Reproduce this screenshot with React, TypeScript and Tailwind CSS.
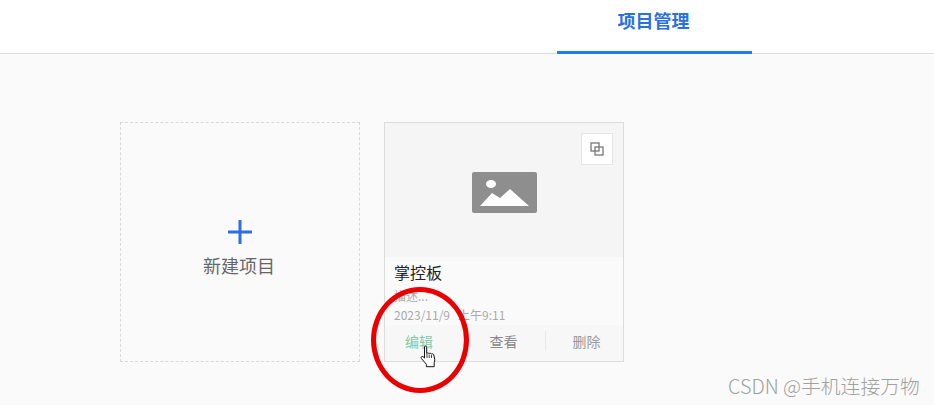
const font = "font-['Noto_Sans_CJK_SC','Liberation_Sans',sans-serif]";

const HandCursor = () => (
  <svg width="17" height="23" viewBox="0 0 17 23" className="absolute left-[420px] top-[345px]">
    <path
      d="M4.500 1.500c.9-.9 2.200-.4 2.200.9v6.200c.4-.8 2-.9 2.400.1.500-.7 2-.6 2.300.4.600-.6 2.100-.4 2.400.7l.9 4.500c.2 1.200 0 2.400-.5 3.400v4H6.400v-2.400L1.300 13.400c-.8-1.100.5-2.600 1.800-1.700l1.400 1.300V1.500z"
      fill="#fff"
      stroke="#111"
      strokeWidth="1"
      strokeLinejoin="round"
    />
    <path d="M7 9v4M9.200 9.500v3.500M11.500 10v3" stroke="#111" strokeWidth="0.8" fill="none" />
  </svg>
);

const CopyIcon = () => (
  <svg width="14" height="14" viewBox="0 0 14 14" fill="none" stroke="#777" strokeWidth="1.300">
    <rect x="1" y="1" width="8" height="8" />
    <rect x="5" y="5" width="8" height="8" />
  </svg>
);

const ImageIcon = () => (
  <svg width="65" height="41" viewBox="0 0 65 41">
    <rect x="0" y="0" width="65" height="41" rx="2" fill="#8e8e8e" />
    <ellipse cx="19" cy="12" rx="5" ry="4" fill="#fff" />
    <path d="M8 34 20 21 28 26 38 17 57 34Z" fill="#fff" />
  </svg>
);

export default function App() {
  return (
    <div className={`relative h-[405px] w-[934px] overflow-hidden bg-[#fafafa] ${font}`}>
      {/* header */}
      <div className="flex h-[54px] justify-end border-b border-[#dedede] bg-white pr-[182px]">
        <div className="flex h-[54px] w-[195px] items-start justify-center border-b-[3px] border-[#1f7cf0] pt-[7px] pr-[2px] text-[18px] leading-[26px] font-bold text-[#2b6fe0]">
          项目管理
        </div>
      </div>

      {/* cards */}
      <div className="flex gap-[24px] pt-[68px] pl-[120px]">
        <div className="flex h-[240px] w-[240px] flex-col items-center border border-dashed border-[#d9d9d9] pt-[97px]">
          <svg width="24" height="24" viewBox="0 0 24 24" fill="#2f6de1">
            <rect x="0" y="10.500" width="24" height="3" />
            <rect x="10.500" y="0" width="3" height="24" />
          </svg>
          <div className="mt-[8px] pr-[2px] text-[18px] leading-[26px] text-[#666]">新建项目</div>
        </div>

        <div className="flex h-[240px] w-[240px] flex-col border border-[#dcdcdc]">
          <div className="relative flex h-[134px] shrink-0 items-center justify-center bg-[#f5f5f5] pt-[5px]">
            <ImageIcon />
            <div className="absolute top-[10px] right-[10px] flex h-[32px] w-[32px] items-center justify-center border border-[#e6e6e6] bg-white">
              <CopyIcon />
            </div>
          </div>
          <div className="flex-1 px-[9px]">
            <div className="pt-[3px] text-[16px] leading-[24px] text-[#222]">掌控板</div>
            <div className="mt-[2px] text-[12px] leading-[20px] text-[#aaa]">描述...</div>
            <div className="text-[12px] leading-[18px] whitespace-pre text-[#aaa]">2023/11/9{"   "}上午9:11</div>
          </div>
          <div className="flex h-[36px] shrink-0 items-center bg-[#f7f7f7] pb-[4px] text-[14px]">
            <div className="w-[78px] pr-[10px] text-center text-[#7fcbaa]">编辑</div>
            <div className="h-[20px] w-px bg-[#e8e8e8]" />
            <div className="w-[81px] pr-[2px] text-center text-[#888]">查看</div>
            <div className="h-[20px] w-px bg-[#e8e8e8]" />
            <div className="flex-1 pl-[4px] text-center text-[#999]">删除</div>
          </div>
        </div>
      </div>

      {/* annotation drawn over the screenshot */}
      <div className="absolute top-[287px] left-[371px] h-[106px] w-[98px] rounded-[50%] border-[5px] border-[#ea0000]" />
      <HandCursor />

      <div className="absolute top-[373px] left-[728px] text-[19.800px] leading-[26px] font-light whitespace-nowrap text-[#a0a0a0]">
        CSDN @手机连接万物
      </div>
    </div>
  );
}
